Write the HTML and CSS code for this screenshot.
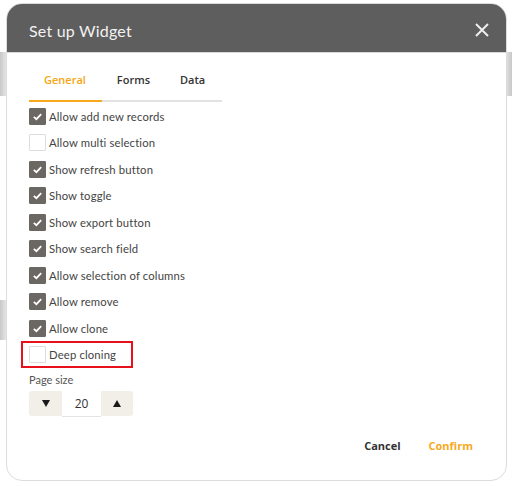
FILE: index.html
```html
<!DOCTYPE html>
<html>
<head>
<meta charset="utf-8">
<link rel="stylesheet" href="styles.css">
</head>
<body>
<div class="dialog">
  <div class="header">
    <span class="title">Set up Widget</span>
    <svg class="close" width="14" height="14" viewBox="0 0 14 14"><path d="M1 1 L13 13 M13 1 L1 13" stroke="#eeeeee" stroke-width="2" fill="none"/></svg>
  </div>
  <div class="content">
    <div class="tabs">
      <span class="tab active">General</span>
      <span class="tab">Forms</span>
      <span class="tab">Data</span>
    </div>
    <div class="list">
      <div class="row"><span class="box on"><svg viewBox="0 0 17 17"><path d="M4.8 8.8 L7.4 11.2 L12.2 6.2" /></svg></span><span class="label">Allow add new records</span></div>
      <div class="row"><span class="box"></span><span class="label">Allow multi selection</span></div>
      <div class="row"><span class="box on"><svg viewBox="0 0 17 17"><path d="M4.8 8.8 L7.4 11.2 L12.2 6.2" /></svg></span><span class="label">Show refresh button</span></div>
      <div class="row"><span class="box on"><svg viewBox="0 0 17 17"><path d="M4.8 8.8 L7.4 11.2 L12.2 6.2" /></svg></span><span class="label">Show toggle</span></div>
      <div class="row"><span class="box on"><svg viewBox="0 0 17 17"><path d="M4.8 8.8 L7.4 11.2 L12.2 6.2" /></svg></span><span class="label">Show export button</span></div>
      <div class="row"><span class="box on"><svg viewBox="0 0 17 17"><path d="M4.8 8.8 L7.4 11.2 L12.2 6.2" /></svg></span><span class="label">Show search field</span></div>
      <div class="row"><span class="box on"><svg viewBox="0 0 17 17"><path d="M4.8 8.8 L7.4 11.2 L12.2 6.2" /></svg></span><span class="label">Allow selection of columns</span></div>
      <div class="row"><span class="box on"><svg viewBox="0 0 17 17"><path d="M4.8 8.8 L7.4 11.2 L12.2 6.2" /></svg></span><span class="label">Allow remove</span></div>
      <div class="row"><span class="box on"><svg viewBox="0 0 17 17"><path d="M4.8 8.8 L7.4 11.2 L12.2 6.2" /></svg></span><span class="label">Allow clone</span></div>
      <div class="row highlight"><span class="box"></span><span class="label">Deep cloning</span></div>
    </div>
    <div class="field-label">Page size</div>
    <div class="stepper">
      <span class="step down"><svg width="8" height="7" viewBox="0 0 8 7"><path d="M0 0 H8 L4 7 Z" fill="#1a1a1a"/></svg></span>
      <span class="value">20</span>
      <span class="step up"><svg width="8" height="7" viewBox="0 0 8 7"><path d="M0 7 H8 L4 0 Z" fill="#1a1a1a"/></svg></span>
    </div>
  </div>
  <div class="footer">
    <span class="btn cancel">Cancel</span>
    <span class="btn confirm">Confirm</span>
  </div>
</div>
</body>
</html>
```

FILE: styles.css
```css
html, body {
  margin: 0;
  padding: 0;
}
body {
  width: 512px;
  height: 486px;
  overflow: hidden;
  background:
    linear-gradient(90deg, #c8c8c8, #e4e4e4) 0 52px / 6px 44px no-repeat,
    linear-gradient(90deg, #c8c8c8, #e4e4e4) 0 300px / 6px 40px no-repeat,
    linear-gradient(90deg, #e0e0e0, #c8c8c8) 506px 52px / 6px 44px no-repeat,
    #ffffff;
  font-family: Lato, "Open Sans", sans-serif;
}
.dialog {
  margin: 3px 0 0 6px;
  width: 499px;
  height: 476px;
  border: 1px solid #dcdcdc;
  border-radius: 16px;
  overflow: hidden;
  background: #ffffff;
  display: flex;
  flex-direction: column;
}
.header {
  height: 49px;
  flex: none;
  background: #5e5e5e;
  display: flex;
  align-items: center;
  justify-content: space-between;
  padding: 0 17px 0 22px;
  border-bottom: 1px solid #d8d8d8;
  box-sizing: border-box;
}
.title {
  color: #f2f2f2;
  font-family: Lato, sans-serif;
  font-size: 16px;
  letter-spacing: 0.2px;
  padding-top: 4px;
}
.close {
  margin-top: 4px;
}
.content {
  padding: 0 22px;
}
.tabs {
  margin-top: 13px;
  display: flex;
  width: 193px;
  border-bottom: 2px solid #e2e2e2;
}
.tab {
  font-family: "Open Sans", sans-serif;
  font-weight: 600;
  font-size: 11px;
  line-height: 14px;
  color: #333333;
  padding: 7px 15px 13px;
  margin-bottom: -2px;
  border-bottom: 2px solid transparent;
}
.tab:first-child {
  padding-right: 16px;
}
.tab.active {
  color: #f5a512;
  border-bottom-color: #f7a81b;
}
.list {
  margin-top: 1px;
  display: flex;
  flex-direction: column;
  align-items: flex-start;
}
.row {
  height: 26.5px;
  display: flex;
  align-items: center;
  gap: 3px;
  position: relative;
}
.box {
  width: 17px;
  height: 17px;
  box-sizing: border-box;
  border: 1px solid #dedede;
  border-radius: 1px;
  background: #ffffff;
  display: flex;
}
.box.on {
  background: #6b6864;
  border-color: #6b6864;
}
.box svg {
  width: 17px;
  height: 17px;
  margin: -1px;
}
.box svg path {
  stroke: #ffffff;
  stroke-width: 1.8;
  fill: none;
}
.label {
  font-size: 11.3px;
  color: #444444;
  letter-spacing: 0.15px;
}
.highlight::after {
  content: "";
  position: absolute;
  left: -8px;
  right: -17px;
  top: -1px;
  bottom: 0;
  border: 2px solid #e8101a;
}
.field-label {
  margin-top: 5px;
  font-size: 11px;
  line-height: 14px;
  color: #555555;
}
.stepper {
  margin-top: 4px;
  display: flex;
  width: 104px;
  height: 25px;
  background: #f1efe8;
  border-radius: 3px;
}
.step {
  width: 33px;
  display: flex;
  align-items: center;
  justify-content: center;
}
.step.up {
  width: 32px;
}
.value {
  width: 39px;
  background: #ffffff;
  display: flex;
  align-items: center;
  justify-content: center;
  font-family: "Open Sans", sans-serif;
  font-size: 12px;
  color: #333333;
  box-shadow: 0 1px 0 #e4e4e4;
}
.footer {
  margin-top: auto;
  display: flex;
  justify-content: flex-end;
  gap: 28px;
  padding: 0 33px 20px 0;
}
.btn {
  font-family: "Open Sans", sans-serif;
  font-weight: 700;
  font-size: 11px;
  line-height: 28px;
}
.cancel {
  color: #333333;
}
.confirm {
  color: #f7a81b;
}
```
